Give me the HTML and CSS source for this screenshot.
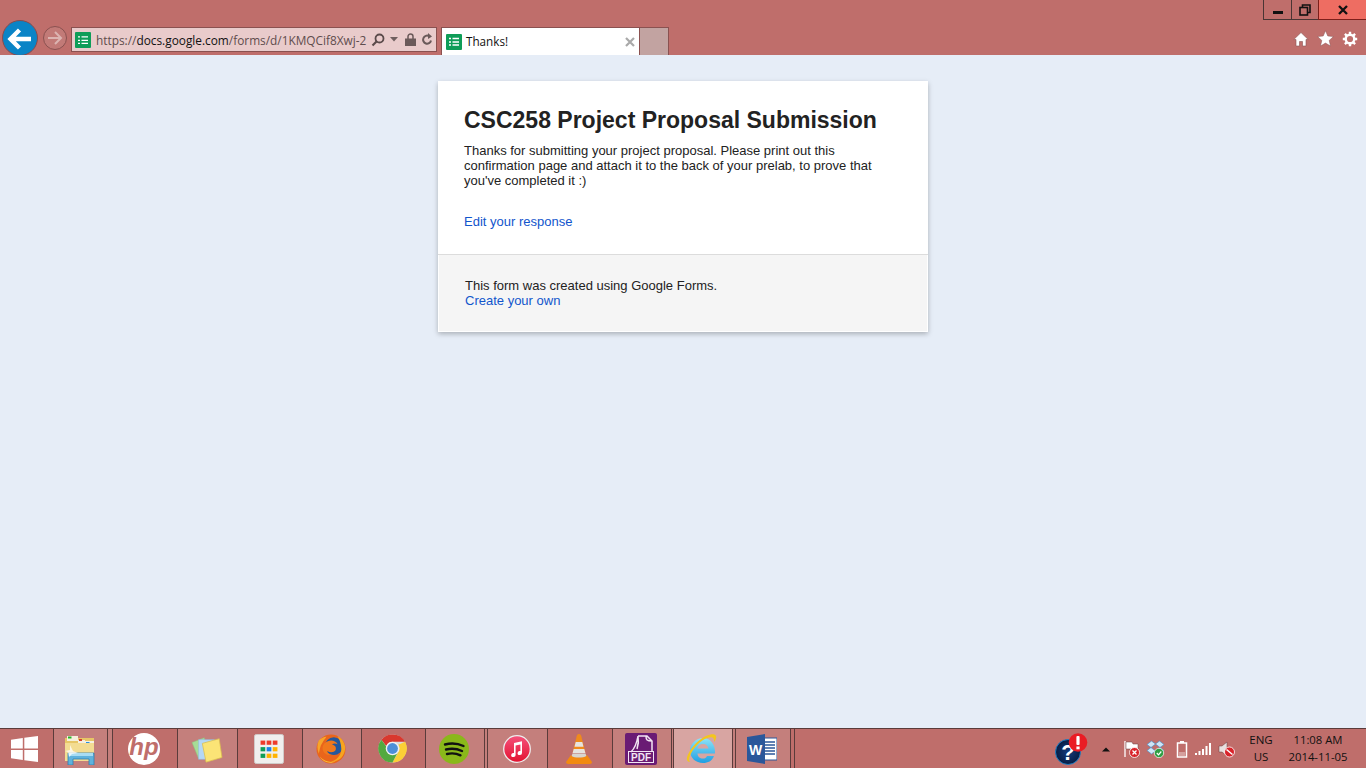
FILE: index.html
```html
<!DOCTYPE html>
<html lang="en">
<head>
<meta charset="utf-8">
<title>Thanks!</title>
<link rel="stylesheet" href="styles.css">
</head>
<body>
<header class="chrome">
  <div class="caption">
    <div class="winbtn minb"><svg width="12" height="12" viewBox="0 0 12 12"><rect x="1" y="7" width="10" height="3" fill="#111"/></svg></div>
    <div class="winbtn maxb"><svg width="12" height="12" viewBox="0 0 12 12" fill="none" stroke="#111" stroke-width="1.6"><rect x="1" y="3.500" width="7.500" height="7.500"/><path d="M3.500 3V1h7.500v7.500H9"/></svg></div>
    <div class="winbtn closeb"><svg width="12" height="12" viewBox="0 0 12 12" fill="none" stroke="#111" stroke-width="2.300"><path d="M2 2l8 8M10 2l-8 8"/></svg></div>
  </div>
  <nav class="navrow">
    <div class="back"><svg width="36" height="36" viewBox="0 0 36 36"><path d="M8 19h21M17.500 10l-9 9 9 9" fill="none" stroke="#fff" stroke-width="4.400"/></svg></div>
    <div class="forward"><svg width="24" height="24" viewBox="0 0 24 24"><path d="M5 12h13M12 6l6 6-6 6" fill="none" stroke="#dcb4b1" stroke-width="2"/></svg></div>
    <div class="address">
      <svg class="favicon" width="16" height="16" viewBox="0 0 16 16"><rect width="16" height="16" rx="1" fill="#0f9d58"/><path d="M3 4.800h2M3 8.300h2M3 11.300h2M6.500 4.800h6.500M6.500 8.300h6.500M6.500 11.300h6.500" stroke="#fff" stroke-width="1.300"/></svg>
      <div class="url">https://<b>docs.google.com</b>/forms/d/1KMQCif8Xwj-2</div>
      <svg class="ai-search" width="14" height="14" viewBox="0 0 14 14"><circle cx="8.500" cy="5.500" r="4" fill="none" stroke="#5a4a4a" stroke-width="1.800"/><path d="M5.500 8.500L1.500 12.500" stroke="#5a4a4a" stroke-width="2.200"/></svg>
      <svg class="ai-drop" width="8" height="5" viewBox="0 0 8 5"><path d="M0 0h8L4 4.500z" fill="#6f5f5f"/></svg>
      <svg class="ai-lock" width="11" height="13" viewBox="0 0 11 13"><path d="M3 6V3.500a2.500 2.500 0 0 1 5 0V6" fill="none" stroke="#6b5a5a" stroke-width="1.500"/><rect y="5.500" width="11" height="7.500" fill="#6b5a5a"/></svg>
      <svg class="ai-reload" width="12" height="13" viewBox="0 0 12 13"><path d="M10 7.500a4 4 0 1 1-2-4.400" fill="none" stroke="#6b5a5a" stroke-width="2"/><path d="M7 0v6l4-2.500z" fill="#6b5a5a"/></svg>
    </div>
    <div class="tab">
      <svg class="favicon" width="16" height="16" viewBox="0 0 16 16"><rect width="16" height="16" rx="1" fill="#0f9d58"/><path d="M3 4.500h2M3 8h2M3 11h2M6.500 4.500h6.500M6.500 8h6.500M6.500 11h6.500" stroke="#fff" stroke-width="1.300"/></svg>
      <span class="tabtitle">Thanks!</span>
      <svg class="tabx" width="10" height="10" viewBox="0 0 10 10"><path d="M1 1l8 8M9 1l-8 8" stroke="#a9a9a9" stroke-width="2.200"/></svg>
    </div>
    <div class="newtab"></div>
    <div class="tools">
      <svg width="16" height="16" viewBox="0 0 16 16"><path d="M8 1.500L.8 8.500h2.200V15h3.500v-4.500h3V15H13V8.500h2.200z" fill="#fff" stroke="#8a5554" stroke-width=".6"/></svg>
      <svg width="17" height="17" viewBox="0 0 17 17"><path d="M8.500.8l2.300 5.200 5.700.6-4.300 3.800 1.300 5.600-5-2.900-5 2.900 1.300-5.600L.5 6.600l5.700-.6z" fill="#fff" stroke="#8a5554" stroke-width=".5"/></svg>
      <svg width="16" height="16" viewBox="0 0 16 16"><circle cx="8" cy="8" r="4.300" fill="none" stroke="#fff" stroke-width="2.400"/><path d="M8 .8v3M8 12.200v3M.8 8h3M12.200 8h3M2.900 2.900l2.100 2.100M11 11l2.100 2.100M13.100 2.900L11 5M5 11l-2.100 2.100" stroke="#fff" stroke-width="2.400"/></svg>
    </div>
  </nav>
</header>

<main class="page">
  <section class="card">
    <div class="card-main">
      <h1>CSC258 Project Proposal Submission</h1>
      <p class="msg">Thanks for submitting your project proposal. Please print out this confirmation page and attach it to the back of your prelab, to prove that you've completed it :)</p>
      <a class="link edit" href="#">Edit your response</a>
    </div>
    <div class="card-foot">
      <div>This form was created using Google Forms.</div>
      <a class="link" href="#">Create your own</a>
    </div>
  </section>
</main>

<footer class="taskbar">
  <div class="tb start"><svg width="28" height="26" viewBox="0 0 28 26"><path d="M0 3.700l11.800-1.700v10.500H0zM13.300 1.800L27 0v12.500H13.300zM0 14h11.800v10L0 22.300zM13.300 14H27v12l-13.700-1.800z" fill="#fff"/></svg></div>
  <div class="tb w54 run"><svg width="32" height="32" viewBox="0 0 32 32"><path d="M1 5h29v22H1z" fill="#e7c667"/><path d="M3 3h11v5H3z" fill="#f5f0dc"/><path d="M4 3.500h3.500v2H4z" fill="#25b32b"/><path d="M14 7h7v4h-7z" fill="#f4efe0"/><path d="M15 6h3v2h-3z" fill="#d7402a"/><path d="M20 8h10v5H20z" fill="#f6f1e2"/><path d="M22 9h3.500v2H22z" fill="#2a8fe0"/><path d="M1 10h29v18H1z" fill="#f3dc92"/><path d="M4 20h26v12H25v-6H9v6H4z" fill="#5fb2dc" stroke="#2f7fb0" stroke-width=".8"/><path d="M5 20h24v3H5z" fill="#a8dcf3"/><path d="M6 12l3 6 5 2-6 1-3 3-1-5-3-1 5-1z" fill="#fff" opacity=".75"/></svg></div>
  <div class="tb w5 run"></div>
  <div class="tb w65"><svg width="32" height="32" viewBox="0 0 32 32"><circle cx="16" cy="16" r="16" fill="#fff"/><text class="hp" x="16" y="22" text-anchor="middle">hp</text></svg></div>
  <div class="tb w60 run"><svg width="32" height="30" viewBox="0 0 34 32"><path d="M1 9l13-5 5 17-11 5z" fill="#a7dc97" stroke="#8cc47c" stroke-width=".5"/><path d="M8 6h17v21H8z" fill="#b5d7f5" stroke="#8bb8de" stroke-width=".5"/><path d="M13 9l18-5 3 20-17 5z" fill="#fbe476" stroke="#d9bd4d" stroke-width=".8" transform="translate(-1 1)"/></svg></div>
  <div class="tb w65"><svg width="30" height="30" viewBox="0 0 32 32"><rect x=".5" y=".5" width="31" height="31" rx="2" fill="#f0efee" stroke="#cfcdcb"/><rect x="7" y="7" width="5" height="4.500" fill="#ee3b2b"/><rect x="13.500" y="7" width="5" height="4.500" fill="#ee3b2b"/><rect x="20" y="7" width="5" height="4.500" fill="#ee3b2b"/><rect x="7" y="14" width="5" height="4.500" fill="#109d58"/><rect x="13.500" y="14" width="5" height="4.500" fill="#1b80e8"/><rect x="20" y="14" width="5" height="4.500" fill="#ffb300"/><rect x="7" y="21" width="5" height="4.500" fill="#109d58"/><rect x="13.500" y="21" width="5" height="4.500" fill="#ffb300"/><rect x="20" y="21" width="5" height="4.500" fill="#ffb300"/></svg></div>
  <div class="tb w59 run"><svg width="30" height="30" viewBox="0 0 32 32"><circle cx="16" cy="16" r="15.500" fill="#e9651b"/><circle cx="19" cy="13" r="9.500" fill="#24589c"/><path d="M23 2c4 2 7 6 8 11 .5 6-2 11-6 14-3 2-7 3-10 3 7-2 12-7 12-14 0-6-2-10-4-14z" fill="#f6a51f"/><path d="M12 8c4-2 9-1 11 3-2-1-4-1-6 0 3 1 5 3 4 6-2 3-6 3-9 1 0 2 2 4 5 4-5 2-10-2-10-7 0-3 2-6 5-7z" fill="#f0781c"/><path d="M4 24c4 5 11 7 17 5-5 3-13 2-17-5z" fill="#f9c33a"/><path d="M3 7c-2 4-2 9 0 14 1-4 1-8 4-12 1-2 3-4 4-6-3 0-6 2-8 4z" fill="#f7a42a"/></svg></div>
  <div class="tb w64"><svg width="29" height="29" viewBox="0 0 30 30"><circle cx="15" cy="15" r="14.500" fill="#d9d9d9"/><path d="M15 .5A14.500 14.500 0 0 1 28 8H15a7 7 0 0 0-6.500 4.500L3.500 6A14.500 14.500 0 0 1 15 .5z" fill="#d9382e"/><path d="M28 8a14.500 14.500 0 0 1-13 21.500L21 19a7 7 0 0 0 0-8z" fill="#fbcf36"/><path d="M3.500 6a14.500 14.500 0 0 0 11.500 23.500L20.500 19a7 7 0 0 1-12-6z" fill="#53a93f"/><circle cx="15" cy="15" r="7" fill="#f1f1f1"/><circle cx="15" cy="15" r="5.600" fill="#4d8fd8"/></svg></div>
  <div class="tb w59 run"><svg width="30" height="30" viewBox="0 0 30 30"><circle cx="15" cy="15" r="15" fill="#8ab81a"/><path d="M6 10.500c6-1.500 13-1 18.500 1.500M7 15.500c5.500-1.200 11-.8 16 1.500M8 20c4.500-1 9.500-.6 13.500 1.300" fill="none" stroke="#111" stroke-width="2.400" stroke-linecap="round"/></svg></div>
  <div class="tb w3 run"></div>
  <div class="tb w60 run"><svg width="28" height="28" viewBox="0 0 28 28"><defs><linearGradient id="it" x1="0" y1="0" x2="0" y2="1"><stop offset="0" stop-color="#f5527c"/><stop offset="1" stop-color="#e3122f"/></linearGradient></defs><circle cx="14" cy="14" r="13.300" fill="url(#it)" stroke="#eee" stroke-width="1.300"/><path d="M11 8l8-1.800V18a2.200 2 0 1 1-1.600-1.900V9.500L12.600 10.600V20a2.200 2 0 1 1-1.600-1.900z" fill="#fff"/></svg></div>
  <div class="tb w65"><svg width="26" height="30" viewBox="0 0 26 30"><path d="M13 0c1.500 0 2 1 2.400 2.500l4 16H6.600l4-16C11 1 11.500 0 13 0z" fill="#f08a1c"/><path d="M9.700 8h6.600l1.200 4.800H8.500zM7.700 15h10.600l1.100 4H6.600z" fill="#e6e3df"/><path d="M5 21l-5 7c0 1.300 1 2 2 2h22c1 0 2-.7 2-2l-5-7c-1 3-15 3-16 0z" fill="#f28a10"/><path d="M6.500 19.500h13l.8 2.500c-3 2-12 2-14.600 0z" fill="#d8d5cf"/></svg></div>
  <div class="tb w59 run"><svg width="32" height="32" viewBox="0 0 32 32"><rect width="32" height="32" rx="2" fill="#6a1b74"/><path d="M6 19C9 16 12 9 13 3c1 6 0 10-1 13M13 3h9l5 5v11M21 3c0 4 1 5 6 5" fill="none" stroke="#f2e6f3" stroke-width="1.500"/><text class="pdf" x="16" y="28" text-anchor="middle">PDF</text><rect x="3.500" y="18.500" width="25" height="11" fill="none" stroke="#f2e6f3"/></svg></div>
  <div class="tb w2 run"></div>
  <div class="tb w59 active"><svg width="32" height="32" viewBox="0 0 32 32"><defs><linearGradient id="ie" x1="0" y1="0" x2="0" y2="1"><stop offset="0" stop-color="#8ee3f8"/><stop offset="1" stop-color="#1f9fe3"/></linearGradient></defs><path d="M17 5C10 5 4 11 4 18s6 12 13 12c5 0 9-2 11-7h-7c-1 2-2 2.500-4 2.500-3 0-5.500-2-5.500-5H29c.7-8-4-15.500-12-15.500zM11.500 15.500C12 13 14 11 17 11s5 2 5.500 4.500z" fill="url(#ie)"/><path d="M1 27C0 22 9 8 20 3c5-2 9-2.500 10 0 .8 2-1 5-2 6 .2-2 0-4-1.500-4.500C22 3 13 8 7 17c-3 5-5 9-3 12-1.500 0-2.600-1-3-2z" fill="#f3c51f"/></svg></div>
  <div class="tb w3 run"></div>
  <div class="tb w55 run"><svg width="30" height="30" viewBox="0 0 30 30"><path d="M16 4h14v22H16z" fill="#fff" stroke="#2b579a"/><path d="M18 8h10M18 11h10M18 14h10M18 17h10M18 20h10" stroke="#2b579a" stroke-width="1.400"/><path d="M0 3l18-3v30L0 27z" fill="#2b579a"/><text class="wd" x="8.500" y="20.500" text-anchor="middle">W</text></svg></div>
  <div class="tb w4 run"></div>
  <div class="tray">
    <svg class="t-help" width="33" height="34" viewBox="0 0 33 34"><defs><radialGradient id="hl"><stop offset="0" stop-color="#123c7c"/><stop offset="1" stop-color="#071d44"/></radialGradient></defs><circle cx="13" cy="21" r="12.500" fill="url(#hl)" stroke="#1f7fc4" stroke-width="1"/><text class="qm" x="13" y="29" text-anchor="middle">?</text><circle cx="23" cy="11.500" r="9.300" fill="#ea1c24"/><rect x="21.400" y="5" width="3.200" height="9" rx="1" fill="#fff"/><rect x="21.400" y="15.500" width="3.200" height="2.800" fill="#fff"/></svg>
    <svg class="t-up" width="8" height="5" viewBox="0 0 8 5"><path d="M0 4.500L4 .5l4 4z" fill="#111"/></svg>
    <svg class="t-flag" width="18" height="18" viewBox="0 0 18 18"><path d="M2 1v16" stroke="#fff" stroke-width="1.300"/><path d="M3 2h6l1 2h5v7H9l-1-2H3z" fill="#fff" stroke="#6b3d3c" stroke-width=".5"/><circle cx="11.500" cy="12.500" r="5" fill="#d9232a" stroke="#fff" stroke-width=".8"/><path d="M9.500 10.500l4 4M13.500 10.500l-4 4" stroke="#fff" stroke-width="1.300"/></svg>
    <svg class="t-drop" width="18" height="18" viewBox="0 0 18 18"><path d="M4.500 1L0 4.500 4 7.500 0 10.500 4.500 14 8.500 11 12.500 14 17 10.500 13 7.500 17 4.500 12.500 1 8.500 4zM8.500 4L13 7.500 8.500 11 4 7.500z" fill="#cfe6f6" stroke="#4f90c8" stroke-width=".7"/><circle cx="12" cy="13" r="4.700" fill="#2f9e44" stroke="#fff" stroke-width=".7"/><path d="M9.800 13l1.700 1.800 2.800-3.300" fill="none" stroke="#fff" stroke-width="1.200"/></svg>
    <svg class="t-batt" width="14" height="18" viewBox="0 0 14 18"><path d="M2.500 3h9v14h-9z" fill="none" stroke="#fff" stroke-width="1.500"/><path d="M5 1h4v2H5z" fill="#fff"/><path d="M4 12h6v4H4z" fill="#fff" opacity=".35"/></svg>
    <svg class="t-sig" width="18" height="14" viewBox="0 0 18 14"><path d="M1 11h2v2H1zM4.500 9h2v4h-2zM8 7h2v6H8zM11.500 4h2v9h-2zM15 1h2v12h-2z" fill="#fff"/></svg>
    <svg class="t-vol" width="18" height="18" viewBox="0 0 18 18"><path d="M1 6h3l5-4v14l-5-4H1z" fill="#e8e0df" stroke="#6b3d3c" stroke-width=".5"/><circle cx="11.500" cy="12" r="5" fill="#d9232a" stroke="#fff" stroke-width=".8"/><path d="M8.500 9.500l6 5" stroke="#fff" stroke-width="1.500"/></svg>
    <div class="lang"><div>ENG</div><div>US</div></div>
    <div class="clock"><div>11:08 AM</div><div>2014-11-05</div></div>
  </div>
</footer>
</body>
</html>
```
FILE: styles.css
```css
* { box-sizing: border-box; }
html, body { margin: 0; padding: 0; }
body {
  width: 1366px;
  height: 768px;
  display: flex;
  flex-direction: column;
  overflow: hidden;
  background: #e6edf7;
  font-family: "Liberation Sans", Arial, sans-serif;
}
svg { display: block; flex: none; }

/* window chrome */
.chrome { height: 55px; flex: none; background: #bf6e6b; overflow: hidden; }
.caption { height: 20px; display: flex; justify-content: flex-end; }
.winbtn { height: 20px; display: flex; align-items: center; justify-content: center; border: 1px solid #4a3534; border-top: 0; border-right: 0; }
.minb { width: 28px; }
.maxb { width: 27px; }
.closeb { width: 48px; background: #ee6d62; border-color: #7d1f1a; }

.navrow { height: 35px; display: flex; align-items: flex-start; padding-left: 2px; }
.back { width: 36px; height: 36px; border-radius: 50%; background: #0a84c6; border: 1px solid #8b4a4a; flex: none; }
.back svg { margin: -1px; }
.forward { width: 24px; height: 24px; margin: 6px 0 0 5px; border-radius: 50%; border: 1px solid #8a5150; background: #c27a77; flex: none; }
.forward svg { margin: -1px; }
.address { width: 366px; height: 25px; margin: 7px 0 0 4px; background: #e9cbcb; border: 1px solid #8a5150; display: flex; align-items: center; padding-left: 3px; flex: none; }
.url { width: 271px; margin-left: 5px; overflow: hidden; white-space: nowrap; font: 11.850px "Open Sans", sans-serif; color: #5f4d4d; flex: none; }
.url b { font-weight: 400; color: #111; }
.ai-search { margin-left: 4px; }
.ai-drop { margin-left: 5px; }
.ai-lock { margin-left: 7px; }
.ai-reload { margin-left: 5px; }
.tab { width: 199px; height: 28px; margin: 7px 0 0 4px; background: #fff; border: 1px solid #8a5150; border-bottom: 0; display: flex; align-items: center; padding: 0 4px 0 4px; flex: none; }
.tabtitle { margin: -2px 0 0 4px; font: 11.700px "Open Sans", sans-serif; color: #111; flex: 1; }
.newtab { width: 29px; height: 28px; margin-top: 7px; background: #c2a3a1; border: 1px solid #8a5150; border-left: 0; border-bottom: 0; flex: none; }
.tools { margin-left: auto; margin-top: 10px; display: flex; gap: 8px; padding-right: 8px; align-items: center; }

/* page */
.page { flex: 1; display: flex; justify-content: center; align-items: flex-start; padding-top: 26px; }
.card { width: 490px; height: 251px; background: #fff; box-shadow: 0 2px 5px rgba(0,0,0,.26); display: flex; flex-direction: column; }
.card-main { height: 174px; padding: 24px 26px 0; border-bottom: 1px solid #dcdcdc; }
h1 { margin: 0; font-size: 23px; line-height: 30px; font-weight: 700; color: #222; }
.msg { margin: 8px 0 0; font-size: 13px; line-height: 15px; color: #222; }
.link { color: #1155cc; text-decoration: none; font-size: 13px; line-height: 15px; display: block; }
.edit { margin-top: 26px; }
.card-foot { flex: 1; background: #f5f5f5; padding: 23px 26px 0; font-size: 13px; line-height: 15px; color: #222; border: 1px solid #fff; border-top: 0; }

/* taskbar */
.taskbar { height: 40px; flex: none; background: #bf6e6b; display: flex; border-top: 1px solid #5a3c3b; }
.tb { height: 39px; display: flex; align-items: center; justify-content: center; flex: none; border-right: 1px solid #5a3c3b; }
.tb svg { margin-right: 2px; }
.run { background: #c47f7c; }
.active { background: #d8a5a2; }
.start { width: 54px; padding-top: 1px; }
.start svg { margin-right: 4px; }
.w54 { width: 54px; }
.w5 { width: 5px; }
.w65 { width: 65px; }
.w60 { width: 60px; }
.w59 { width: 59px; }
.w64 { width: 64px; }
.w3 { width: 3px; }
.w2 { width: 2px; }
.w55 { width: 55px; }
.w4 { width: 4px; background: #bf6e6b; }
.hp { font: italic 700 24px "Liberation Sans", sans-serif; fill: #bf6e6b; }
.pdf { font: 700 10px "Liberation Sans", sans-serif; fill: #f2e6f3; }
.wd { font: 700 14px "Liberation Sans", sans-serif; fill: #fff; }
.qm { font: 700 22px "Liberation Sans", sans-serif; fill: #fff; }

.tray { margin-left: auto; display: flex; align-items: center; height: 39px; padding-right: 9px; color: #111; }
.t-help { margin-top: -2px; }
.t-up { margin-left: 14px; margin-top: 1px; }
.t-flag { margin-left: 13px; }
.t-drop { margin-left: 6px; }
.t-batt { margin-left: 10px; }
.t-sig { margin-left: 5px; }
.t-vol { margin-left: 6px; }
.lang { width: 36px; margin-left: 7px; margin-top: -2px; text-align: center; font: 11.500px/17px "Open Sans", sans-serif; }
.clock { width: 78px; margin-top: -2px; text-align: center; font: 11.300px/17px "Open Sans", sans-serif; }
```
